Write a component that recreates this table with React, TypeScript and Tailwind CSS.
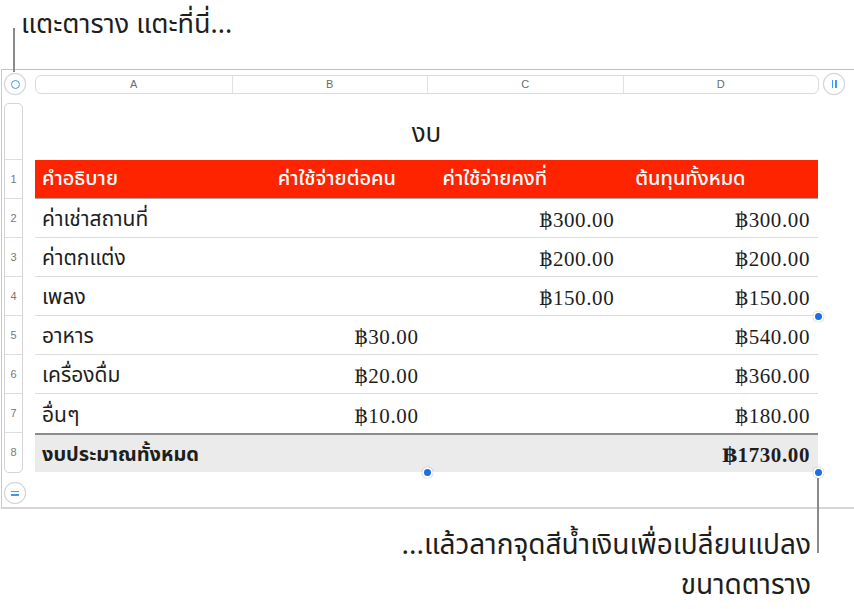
import React from "react";

const thai = { fontFamily: '"Noto Sans Thai", "Noto Sans Thai UI", "Noto Sans", "DejaVu Sans", sans-serif' };
const serif = { fontFamily: '"Liberation Serif", "DejaVu Serif", "Noto Sans Thai", serif' };

const rows: string[][] = [
  ["ค่าเช่าสถานที่", "", "฿300.00", "฿300.00"],
  ["ค่าตกแต่ง", "", "฿200.00", "฿200.00"],
  ["เพลง", "", "฿150.00", "฿150.00"],
  ["อาหาร", "฿30.00", "", "฿540.00"],
  ["เครื่องดื่ม", "฿20.00", "", "฿360.00"],
  ["อื่นๆ", "฿10.00", "", "฿180.00"],
];

function Dot({ className }: { className: string }) {
  return (
    <div
      className={
        "absolute w-[11px] h-[11px] rounded-full bg-[#1a6fe3] border-2 border-white shadow-[0_0_1px_rgba(0,0,0,0.5)] " +
        className
      }
    />
  );
}

export default function App() {
  return (
    <div className="relative w-[854px] h-[609px] bg-white overflow-hidden text-[#1e1e1e]" style={thai}>
      {/* top caption */}
      <div className="h-[69px] pl-[21px] pt-[6px] text-[27px] leading-[38px]">แตะตาราง แตะที่นี่...</div>

      {/* frame */}
      <div className="ml-[1px] border-t border-l border-b-2 border-t-[#c2c2c2] border-l-[#c8c8c8] border-b-[#d6d6d6]">
        {/* column header row */}
        <div className="flex items-center pt-[3px] h-[25px]">
          <div className="ml-[2px] w-[22px] h-[22px] rounded-full border border-[#d2d2d2] bg-white flex items-center justify-center shadow-[0_0_1px_rgba(0,0,0,0.15)]">
            <div className="w-[9px] h-[9px] rounded-full border-[1.5px] border-[#3d9bf5]" />
          </div>
          <div className="ml-[9px] w-[784px] h-[19px] rounded-[6px] border border-[#dadada] grid grid-cols-4 text-[11px] text-[#6b6b6b]" style={{ fontFamily: '"Liberation Sans", Arial, sans-serif' }}>
            {["A", "B", "C", "D"].map((c, i) => (
              <div key={c} className={"flex items-center justify-center " + (i > 0 ? "border-l border-[#e2e2e2]" : "")}>
                {c}
              </div>
            ))}
          </div>
          <div className="ml-[4px] w-[22px] h-[22px] rounded-full border border-[#d2d2d2] bg-white flex items-center justify-center gap-[2px] shadow-[0_0_1px_rgba(0,0,0,0.15)]">
            <div className="w-[1.5px] h-[8px] bg-[#3d9bf5]" />
            <div className="w-[1.5px] h-[8px] bg-[#3d9bf5]" />
          </div>
        </div>

        {/* body */}
        <div className="flex mt-[8px]">
          {/* row headers */}
          <div className="ml-[2px] w-[19px] rounded-[5px] border border-[#d5d5d5] flex flex-col text-[11px] text-[#777]" style={{ fontFamily: '"Liberation Sans", Arial, sans-serif' }}>
            <div className="h-[56px] border-b border-[#dedede]" />
            {[1, 2, 3, 4, 5, 6, 7, 8].map((n) => (
              <div key={n} className={"h-[39px] flex items-center justify-center " + (n < 8 ? "border-b border-[#dedede]" : "")}>
                {n}
              </div>
            ))}
          </div>

          {/* table */}
          <div className="ml-[12px] w-[783px]">
            <div className="h-[57px] flex items-center justify-center text-[26px] pt-[5px]">งบ</div>
            <div className="h-[39px] grid grid-cols-4 bg-[#ff2400] text-white text-[20px] font-medium border-b border-[#a8a8a8]">
              <div className="flex items-center pl-[7px]">คำอธิบาย</div>
              <div className="flex items-center pl-[47px]">ค่าใช้จ่ายต่อคน</div>
              <div className="flex items-center pl-[16px]">ค่าใช้จ่ายคงที่</div>
              <div className="flex items-center pl-[13px]">ต้นทุนทั้งหมด</div>
            </div>
            {rows.map((r, i) => (
              <div key={i} className={"h-[39px] grid grid-cols-4 " + (i < rows.length - 1 ? "border-b border-[#dcdcdc]" : "")}>
                <div className="flex items-center pl-[7px] text-[21px] pt-[4px]">{r[0]}</div>
                {[1, 2, 3].map((j) => (
                  <div key={j} className="flex items-center justify-end pr-[8px] text-[21px] tracking-[0.6px] pt-[6px]" style={serif}>
                    {r[j]}
                  </div>
                ))}
              </div>
            ))}
            <div className="h-[39px] grid grid-cols-4 bg-[#ebebeb] border-t-2 border-[#8c8c8c]">
              <div className="col-span-3 flex items-center pl-[7px] text-[20px] font-bold pt-[2px]">งบประมาณทั้งหมด</div>
              <div className="flex items-center justify-end pr-[8px] text-[21px] tracking-[0.6px] font-bold pt-[4px]" style={serif}>
                ฿1730.00
              </div>
            </div>
          </div>
        </div>

        {/* add row button */}
        <div className="mt-[9px] mb-[3px] ml-[2px] w-[22px] h-[22px] rounded-full border border-[#d2d2d2] bg-white flex flex-col items-center justify-center gap-[2px] shadow-[0_0_1px_rgba(0,0,0,0.15)]">
          <div className="w-[8px] h-[1.5px] bg-[#3d9bf5]" />
          <div className="w-[8px] h-[1.5px] bg-[#3d9bf5]" />
        </div>
      </div>

      {/* bottom caption */}
      <div className="mt-[17px] pr-[43px] text-right text-[28px] leading-[40px]">
        <div>...แล้วลากจุดสีน้ำเงินเพื่อเปลี่ยนแปลง</div>
        <div>ขนาดตาราง</div>
      </div>

      {/* leader lines */}
      <div className="absolute left-[13px] top-[28px] w-[2px] h-[44px] bg-[#8a8a8a]" />
      <div className="absolute left-[817px] top-[478px] w-[2px] h-[75px] bg-[#8a8a8a]" />

      {/* handles */}
      <Dot className="left-[813px] top-[311px]" />
      <Dot className="left-[422px] top-[467px]" />
      <Dot className="left-[813px] top-[467px]" />
    </div>
  );
}
